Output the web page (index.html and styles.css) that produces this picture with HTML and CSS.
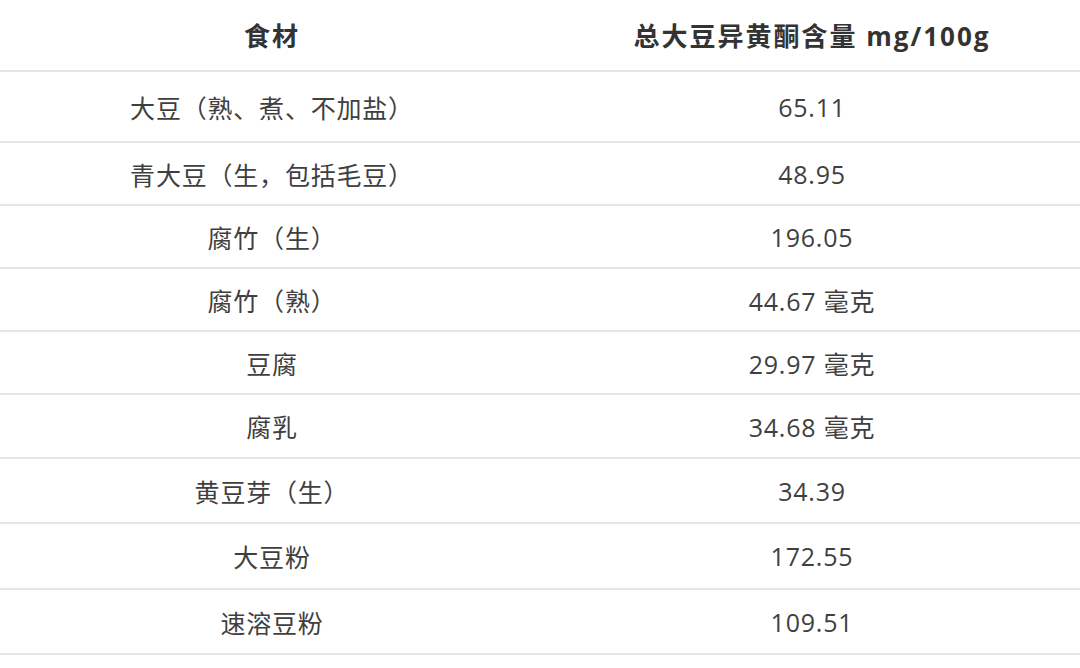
FILE: index.html
```html
<!DOCTYPE html>
<html lang="zh-CN">
<head>
<meta charset="utf-8">
<title>大豆异黄酮含量</title>
<link rel="stylesheet" href="styles.css">
</head>
<body>
<table class="data">
  <thead>
    <tr class="head-row">
      <th class="col-food">食材</th>
      <th class="col-val">总大豆异黄酮含量 mg/100g</th>
    </tr>
  </thead>
  <tbody>
    <tr class="r-first"><td>大豆（熟、煮、不加盐）</td><td>65.11</td></tr>
    <tr class="r-std"><td>青大豆（生，包括毛豆）</td><td>48.95</td></tr>
    <tr class="r-std"><td>腐竹（生）</td><td>196.05</td></tr>
    <tr class="r-std"><td>腐竹（熟）</td><td>44.67 毫克</td></tr>
    <tr class="r-std"><td>豆腐</td><td>29.97 毫克</td></tr>
    <tr class="r-mid"><td>腐乳</td><td>34.68 毫克</td></tr>
    <tr class="r-tall"><td>黄豆芽（生）</td><td>34.39</td></tr>
    <tr class="r-tall2"><td>大豆粉</td><td>172.55</td></tr>
    <tr class="r-tall"><td>速溶豆粉</td><td>109.51</td></tr>
  </tbody>
</table>
</body>
</html>
```

FILE: styles.css
```css
html, body {
  margin: 0;
  padding: 0;
  background: #ffffff;
}

body {
  font-family: "Open Sans", "Noto Sans CJK SC", sans-serif;
  color: #3f3f3f;
}

.data {
  width: 1080px;
  border-collapse: collapse;
  table-layout: fixed;
}

.data th,
.data td {
  text-align: center;
  vertical-align: middle;
  padding: 0;
  border-bottom: 2px solid #e6e6e6;
}

.col-food {
  width: 544px;
}

.col-val {
  width: 536px;
}

.data th {
  height: 70px;
  font-size: 26px;
  font-weight: 700;
  color: #333333;
  letter-spacing: 2px;
}

.data td {
  font-size: 25px;
  font-weight: 400;
  letter-spacing: 0.8px;
}

.r-first td { height: 69px; }
.r-std td { height: 61px; }
.r-mid td { height: 62px; }
.r-tall td { height: 63px; }
.r-tall2 td { height: 64px; }
```
